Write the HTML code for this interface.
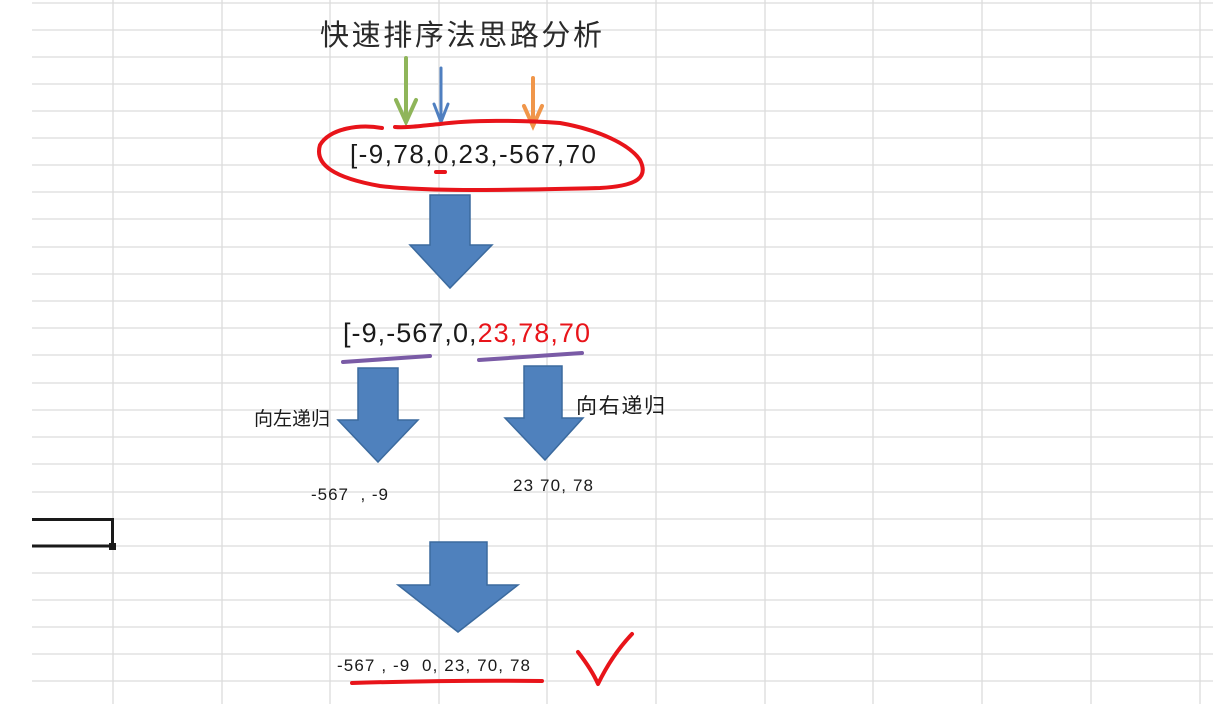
<!DOCTYPE html>
<html><head><meta charset="utf-8"><style>
html,body{margin:0;padding:0;background:#fff;width:1213px;height:704px;overflow:hidden}
svg{display:block}
text{font-family:"Liberation Sans","Noto Sans CJK SC",sans-serif}
</style></head><body>
<svg width="1213" height="704" viewBox="0 0 1213 704" xmlns="http://www.w3.org/2000/svg">
<g stroke="#dcdcdc" stroke-width="1.3">
<line x1="32" y1="3" x2="1213" y2="3"/><line x1="32" y1="30" x2="1213" y2="30"/><line x1="32" y1="57" x2="1213" y2="57"/><line x1="32" y1="84" x2="1213" y2="84"/><line x1="32" y1="111" x2="1213" y2="111"/><line x1="32" y1="138" x2="1213" y2="138"/><line x1="32" y1="165" x2="1213" y2="165"/><line x1="32" y1="192" x2="1213" y2="192"/><line x1="32" y1="219" x2="1213" y2="219"/><line x1="32" y1="247" x2="1213" y2="247"/><line x1="32" y1="274" x2="1213" y2="274"/><line x1="32" y1="301" x2="1213" y2="301"/><line x1="32" y1="328" x2="1213" y2="328"/><line x1="32" y1="355" x2="1213" y2="355"/><line x1="32" y1="383" x2="1213" y2="383"/><line x1="32" y1="410" x2="1213" y2="410"/><line x1="32" y1="437" x2="1213" y2="437"/><line x1="32" y1="464" x2="1213" y2="464"/><line x1="32" y1="492" x2="1213" y2="492"/><line x1="32" y1="519" x2="1213" y2="519"/><line x1="32" y1="546" x2="1213" y2="546"/><line x1="32" y1="573" x2="1213" y2="573"/><line x1="32" y1="600" x2="1213" y2="600"/><line x1="32" y1="627" x2="1213" y2="627"/><line x1="32" y1="654" x2="1213" y2="654"/><line x1="32" y1="681" x2="1213" y2="681"/>
<line x1="113" y1="0" x2="113" y2="704"/><line x1="222" y1="0" x2="222" y2="704"/><line x1="330" y1="0" x2="330" y2="704"/><line x1="439" y1="0" x2="439" y2="704"/><line x1="547" y1="0" x2="547" y2="704"/><line x1="656" y1="0" x2="656" y2="704"/><line x1="765" y1="0" x2="765" y2="704"/><line x1="873" y1="0" x2="873" y2="704"/><line x1="982" y1="0" x2="982" y2="704"/><line x1="1091" y1="0" x2="1091" y2="704"/><line x1="1200" y1="0" x2="1200" y2="704"/>
</g>
<path d="M32 519.5 H112.5 V546 H32" fill="none" stroke="#1a1a1a" stroke-width="3"/>
<rect x="109" y="543" width="7" height="7" fill="#1a1a1a"/>

<text x="320" y="45" font-size="29" fill="#2a2a2a" textLength="282">快速排序法思路分析</text>

<g stroke-linecap="round" fill="none" stroke-width="4">
<path d="M406 58 V120 M396 100 L406 122 L416 100" stroke="#8fb55a"/>
<path d="M441 68 V120 M434 104 L441 122 L448 104" stroke="#4f7fc0" stroke-width="3"/>
<path d="M533 78 V124 M524 106 L533 126 L542 106" stroke="#f0964a"/>
</g>

<path d="M382 128 C360 124 330 128 320 145 C314 165 335 178 380 186 C430 192 520 190 600 188 C640 186 648 176 640 160 C630 145 600 130 560 123 C520 120 470 120 440 124 C420 126 405 128 395 127" fill="none" stroke="#e8141a" stroke-width="4" stroke-linecap="round"/>
<path d="M436 172 H445" stroke="#e8141a" stroke-width="4" stroke-linecap="round"/>
<text x="350" y="163" font-size="26" fill="#1a1a1a" textLength="246">[-9,78,0,23,-567,70</text>

<g fill="#4f81bd" stroke="#3b6a9e" stroke-width="1.5">
<path d="M430 195 H470 V245 H492 L450 288 L410 245 H430 Z"/>
<path d="M358 368 H398 V420 H418 L378 462 L338 420 H358 Z"/>
<path d="M524 366 H562 V418 H583 L545 460 L505 418 H524 Z"/>
<path d="M430 542 H487 V585 H518 L458 632 L398 585 H430 Z"/>
</g>

<text x="343" y="342" font-size="27" fill="#1a1a1a" textLength="247">[-9,-567,0,<tspan fill="#e8141a">23,78,70</tspan></text>
<path d="M343 362 L430 356" stroke="#7a5ba6" stroke-width="4" stroke-linecap="round"/>
<path d="M479 360 L582 353" stroke="#7a5ba6" stroke-width="4" stroke-linecap="round"/>

<text x="254" y="425" font-size="19" fill="#1a1a1a" textLength="76">向左递归</text>
<text x="576" y="413" font-size="21" fill="#1a1a1a" textLength="89">向右递归</text>
<text x="311" y="500" font-size="17" fill="#1a1a1a" textLength="77" xml:space="preserve">-567  , -9</text>
<text x="513" y="491" font-size="17" fill="#1a1a1a" textLength="80">23 70, 78</text>
<text x="337" y="671" font-size="17" fill="#1a1a1a" textLength="193" xml:space="preserve">-567 , -9  0, 23, 70, 78</text>
<path d="M352 683 Q450 680 542 681" stroke="#e8141a" stroke-width="4" fill="none" stroke-linecap="round"/>
<path d="M578 652 Q592 670 598 684 Q612 655 632 634" stroke="#e8141a" stroke-width="4" fill="none" stroke-linecap="round" stroke-linejoin="round"/>
</svg>
</body></html>
